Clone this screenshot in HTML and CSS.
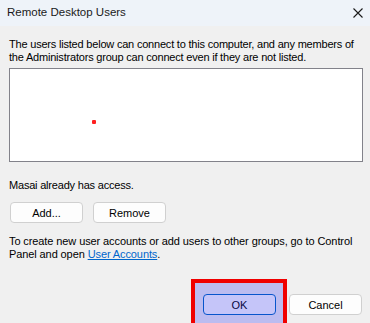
FILE: index.html
```html
<!DOCTYPE html>
<html lang="en">
<head>
    <meta charset="UTF-8">
    <title>Remote Desktop Users</title>
    <link rel="stylesheet" href="styles.css">
</head>
<body>
    <div class="dialog">
        <div class="titlebar">
            <span class="title">Remote Desktop Users</span>
            <svg class="close" width="10" height="10" viewBox="0 0 10 10">
                <path d="M0.5 0.5 L9.5 9.5 M9.5 0.5 L0.5 9.5" stroke="#1a1a1a" stroke-width="1.1" fill="none"/>
            </svg>
        </div>

        <div class="content">
            <p class="intro">The users listed below can connect to this computer, and any members of<br>the Administrators group can connect even if they are not listed.</p>

            <div class="user-list">
                <span class="dot"></span>
            </div>

            <p class="status">Masai already has access.</p>

            <div class="row">
                <button class="btn">Add...</button>
                <button class="btn">Remove</button>
            </div>

            <p class="note">To create new user accounts or add users to other groups, go to Control<br>Panel and open <a href="#">User Accounts</a>.</p>
        </div>

        <div class="footer">
            <button class="btn btn-default">OK</button>
            <button class="btn">Cancel</button>
        </div>

        <div class="highlight"></div>
    </div>
</body>
</html>
```

FILE: styles.css
```css
* {
    margin: 0;
    padding: 0;
    box-sizing: border-box;
}
body {
    font-family: "Liberation Sans", Arial, sans-serif;
    font-size: 11px;
    color: #000;
    background: #f0f0f0;
}
.dialog {
    position: relative;
    width: 370px;
    height: 323px;
    background: #f0f0f0;
    overflow: hidden;
}
.titlebar {
    height: 26px;
    background: #eef3f9;
    display: flex;
    align-items: center;
    justify-content: space-between;
    padding: 0 7px 2px 7px;
}
.title {
    font-size: 11.5px;
    color: #1a1a1a;
}
.close {
    margin-top: 1px;
}
.content {
    padding: 12px 7px 0 9px;
}
.intro,
.status,
.note {
    font-size: 11px;
    letter-spacing: -0.2px;
    white-space: nowrap;
}
.intro {
    line-height: 13px;
}
.user-list {
    position: relative;
    margin-top: 4px;
    width: 354px;
    height: 94px;
    background: #fff;
    border: 1px solid #82828a;
}
.dot {
    position: absolute;
    left: 82px;
    top: 51px;
    width: 4px;
    height: 4px;
    border-radius: 1px;
    background: #ff2020;
}
.status {
    margin-top: 17px;
    line-height: 13px;
}
.row {
    display: flex;
    gap: 10px;
    margin-top: 10px;
    padding-left: 1px;
}
.btn {
    width: 73px;
    height: 21px;
    background: #fdfdfd;
    border: 1px solid #d0d0d0;
    border-radius: 4px;
    font-family: "Liberation Sans", Arial, sans-serif;
    font-size: 11px;
    color: #000;
}
.note {
    margin-top: 12px;
    line-height: 12.5px;
    letter-spacing: -0.1px;
}
.note a {
    color: #0066cc;
    text-decoration: underline;
}
.footer {
    position: absolute;
    right: 8px;
    top: 294px;
    display: flex;
    gap: 13px;
}
.btn-default {
    border: 1px solid #0067c0;
}
.highlight {
    position: absolute;
    left: 191px;
    top: 279px;
    width: 96px;
    height: 48px;
    border: 4px solid #f00000;
    background: rgba(30, 30, 240, 0.25);
}
```
